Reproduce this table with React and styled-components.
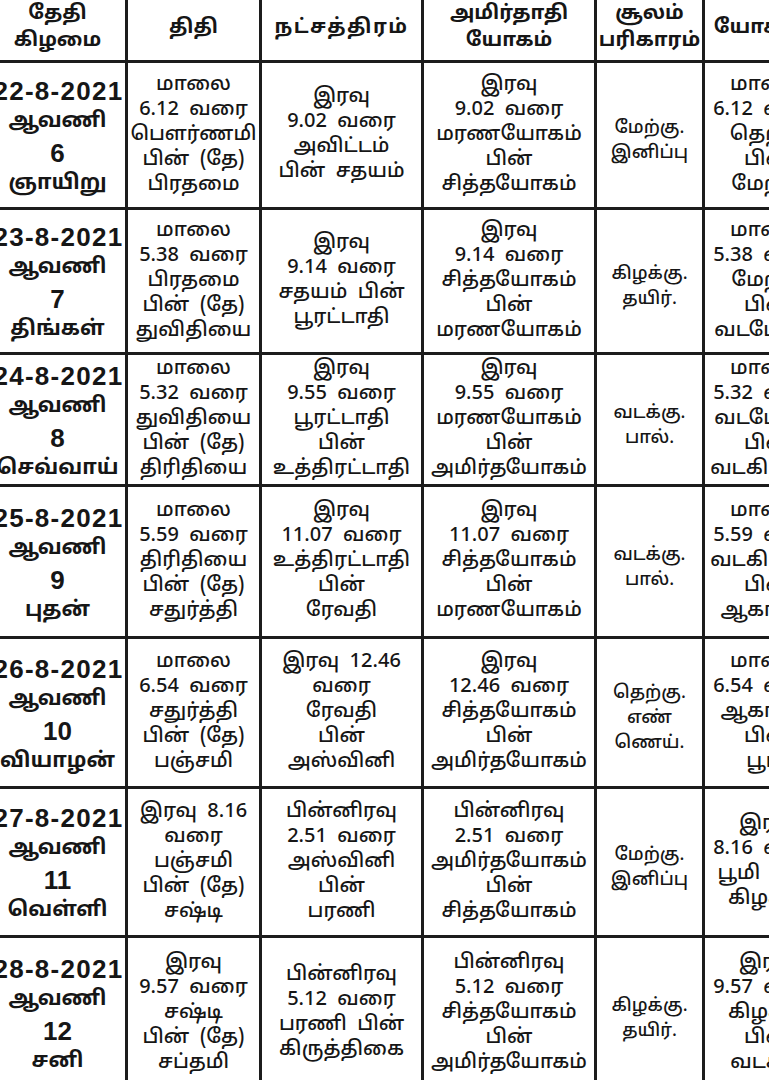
import styled, { createGlobalStyle } from "styled-components";

const GlobalStyle = createGlobalStyle`
  html, body {
    margin: 0;
    padding: 0;
    background: #ffffff;
  }
  body {
    font-family: "Noto Sans Tamil", "Lohit Tamil", "Noto Sans", "DejaVu Sans", sans-serif;
    color: #161616;
  }
`;

// 고정 데이터 - 8월 22일 ~ 28일
const headers = [
  ["தேதி", "கிழமை"],
  ["திதி"],
  ["நட்சத்திரம்"],
  ["அமிர்தாதி", "யோகம்"],
  ["சூலம்", "பரிகாரம்"],
  ["யோகினி"],
];

const rows = [
  {
    date: ["22-8-2021", "ஆவணி", "6", "ஞாயிறு"],
    cells: [
      ["மாலை", "6.12  வரை", "பௌர்ணமி", "பின்  (தே)", "பிரதமை"],
      ["இரவு", "9.02  வரை", "அவிட்டம்", "பின்  சதயம்"],
      ["இரவு", "9.02  வரை", "மரணயோகம்", "பின்", "சித்தயோகம்"],
      ["மேற்கு.", "இனிப்பு"],
      ["மாலை", "6.12  வரை", "தெற்கு", "பின்", "மேற்கு"],
    ],
  },
  {
    date: ["23-8-2021", "ஆவணி", "7", "திங்கள்"],
    cells: [
      ["மாலை", "5.38  வரை", "பிரதமை", "பின்  (தே)", "துவிதியை"],
      ["இரவு", "9.14  வரை", "சதயம்  பின்", "பூரட்டாதி"],
      ["இரவு", "9.14  வரை", "சித்தயோகம்", "பின்", "மரணயோகம்"],
      ["கிழக்கு.", "தயிர்."],
      ["மாலை", "5.38  வரை", "மேற்கு", "பின்", "வடமேற்கு"],
    ],
  },
  {
    date: ["24-8-2021", "ஆவணி", "8", "செவ்வாய்"],
    cells: [
      ["மாலை", "5.32  வரை", "துவிதியை", "பின்  (தே)", "திரிதியை"],
      ["இரவு", "9.55  வரை", "பூரட்டாதி", "பின்", "உத்திரட்டாதி"],
      ["இரவு", "9.55  வரை", "மரணயோகம்", "பின்", "அமிர்தயோகம்"],
      ["வடக்கு.", "பால்."],
      ["மாலை", "5.32  வரை", "வடமேற்கு", "பின்", "வடகிழக்கு"],
    ],
  },
  {
    date: ["25-8-2021", "ஆவணி", "9", "புதன்"],
    cells: [
      ["மாலை", "5.59  வரை", "திரிதியை", "பின்  (தே)", "சதுர்த்தி"],
      ["இரவு", "11.07  வரை", "உத்திரட்டாதி", "பின்", "ரேவதி"],
      ["இரவு", "11.07  வரை", "சித்தயோகம்", "பின்", "மரணயோகம்"],
      ["வடக்கு.", "பால்."],
      ["மாலை", "5.59  வரை", "வடகிழக்கு", "பின்", "ஆகாயம்"],
    ],
  },
  {
    date: ["26-8-2021", "ஆவணி", "10", "வியாழன்"],
    cells: [
      ["மாலை", "6.54  வரை", "சதுர்த்தி", "பின்  (தே)", "பஞ்சமி"],
      ["இரவு  12.46", "வரை", "ரேவதி", "பின்", "அஸ்வினி"],
      ["இரவு", "12.46  வரை", "சித்தயோகம்", "பின்", "அமிர்தயோகம்"],
      ["தெற்கு.", "எண்", "ணெய்."],
      ["மாலை", "6.54  வரை", "ஆகாயம்", "பின்", "பூமி"],
    ],
  },
  {
    date: ["27-8-2021", "ஆவணி", "11", "வெள்ளி"],
    cells: [
      ["இரவு  8.16", "வரை", "பஞ்சமி", "பின்  (தே)", "சஷ்டி"],
      ["பின்னிரவு", "2.51  வரை", "அஸ்வினி", "பின்", "பரணி"],
      ["பின்னிரவு", "2.51  வரை", "அமிர்தயோகம்", "பின்", "சித்தயோகம்"],
      ["மேற்கு.", "இனிப்பு"],
      ["இரவு", "8.16  வரை", "பூமி  பின்", "கிழக்கு"],
    ],
  },
  {
    date: ["28-8-2021", "ஆவணி", "12", "சனி"],
    cells: [
      ["இரவு", "9.57  வரை", "சஷ்டி", "பின்  (தே)", "சப்தமி"],
      ["பின்னிரவு", "5.12  வரை", "பரணி  பின்", "கிருத்திகை"],
      ["பின்னிரவு", "5.12  வரை", "சித்தயோகம்", "பின்", "அமிர்தயோகம்"],
      ["கிழக்கு.", "தயிர்."],
      ["இரவு", "9.57  வரை", "கிழக்கு", "பின்", "வடக்கு"],
    ],
  },
];

const App = () => {
  return (
    <>
      <GlobalStyle />
      <Page>
        <Grid>
          {headers.map((lines, i) => (
            <HeadCell key={"h" + i} $wide={i === 2}>
              {lines.map((t) => (
                <Line key={t}>{t}</Line>
              ))}
            </HeadCell>
          ))}
          {rows.map((row) => (
            <>
              <DateCell key={row.date[0]}>
                {row.date.map((t) => (
                  <Line key={t}>{t}</Line>
                ))}
              </DateCell>
              {row.cells.map((lines, i) => (
                <Cell key={row.date[0] + i} $small={i === 3}>
                  {lines.map((t, j) => (
                    <Line key={j}>{t}</Line>
                  ))}
                </Cell>
              ))}
            </>
          ))}
        </Grid>
      </Page>
    </>
  );
};

const Page = styled.div`
  width: 769px;
  height: 1080px;
  overflow: hidden;
  background: #ffffff;
`;

const Grid = styled.div`
  display: grid;
  margin-left: -10px;
  width: max-content;
  grid-template-columns: 135px 131px 159px 170px 105px 125px;
  grid-template-rows: 60px 144px 142px 129px 149px 147px 146px 150px;
  gap: 3px;
  background: #1c1c1c;
  border-bottom: 3px solid #1c1c1c;
`;

const Cell = styled.div`
  display: flex;
  flex-direction: column;
  align-items: center;
  justify-content: center;
  background: #ffffff;
  text-align: center;
  font-size: ${(p) => (p.$small ? "18px" : "20px")};
  font-weight: 500;
  line-height: 25px;
  padding-top: ${(p) => (p.$small ? "12px" : "0")};
  white-space: pre;
  overflow: hidden;
`;

const HeadCell = styled(Cell)`
  font-size: 20px;
  font-weight: 700;
  line-height: 27px;
  padding-top: 0;
  padding-bottom: 4px;
  letter-spacing: ${(p) => (p.$wide ? "1.5px" : "0")};
`;

const DateCell = styled(Cell)`
  font-family: "Liberation Sans", "Noto Sans Tamil", "Lohit Tamil", sans-serif;
  font-size: 26px;
  font-weight: 700;
  line-height: 31px;
  padding-top: 6px;

  > span:first-child {
    letter-spacing: 1.3px;
    margin-right: -2px;
  }

  > span:nth-child(even) {
    font-family: "Noto Sans Tamil", "Lohit Tamil", sans-serif;
    font-size: 21px;
  }
`;

const Line = styled.span`
  display: block;
`;

export default App;
